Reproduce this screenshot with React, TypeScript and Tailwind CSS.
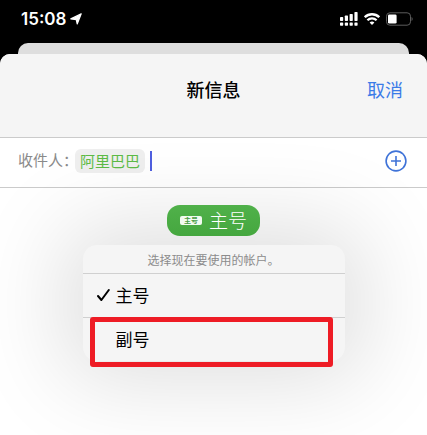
import { useState } from "react";

const accounts = [
  { id: "main", name: "主号" },
  { id: "sub", name: "副号" },
];

function StatusBar() {
  return (
    <div className="flex h-[43px] items-start justify-between pt-[7px] pl-[21px] pr-[14px] text-white">
      <div className="flex items-center gap-1">
        <span className="font-['Inter'] text-[17px] font-semibold leading-6">15:08</span>
        <svg width="12" height="12" viewBox="0 0 12 12" fill="currentColor">
          <path d="M11.2.8 7.2 11 6.3 6.6.8 5.9Z" stroke="currentColor" strokeWidth="1.2" strokeLinejoin="round" />
        </svg>
      </div>

      <div className="flex h-6 items-center gap-[6px]">
        {/* Dual SIM signal */}
        <svg width="18" height="14" viewBox="0 0 18 14" fill="currentColor">
          <rect x="0" y="5" width="3.2" height="4" rx=".7" />
          <rect x="4.8" y="3.6" width="3.2" height="5.4" rx=".7" />
          <rect x="9.6" y="2" width="3.2" height="7" rx=".7" />
          <rect x="14.4" y="0" width="3.2" height="9" rx=".7" />
          <rect x="0" y="10.4" width="3.2" height="3.4" rx=".7" />
          <rect x="4.8" y="10.4" width="3.2" height="3.4" rx=".7" />
          <rect x="9.6" y="10.4" width="3.2" height="3.4" rx=".7" />
          <rect x="14.4" y="10.4" width="3.2" height="3.4" rx=".7" />
        </svg>
        <svg width="16" height="12" viewBox="0 0 16 12" fill="none" stroke="currentColor" strokeWidth="2.3">
          <path d="M.8 4.2a10.3 10.3 0 0 1 14.4 0" />
          <path d="M3.4 7.2a6.6 6.6 0 0 1 9.2 0" />
          <path d="M8 12 5.6 9.6a3.5 3.5 0 0 1 4.8 0Z" fill="currentColor" stroke="none" />
        </svg>
        <svg width="27" height="14" viewBox="0 0 27 14">
          <rect x=".5" y=".8" width="24" height="12.4" rx="3.4" fill="none" stroke="#5c5c5c" />
          <rect x="2" y="2.4" width="8.6" height="9.2" rx="1.4" fill="#fff" />
          <path d="M25.6 5v4c1.3-.6 1.3-3.4 0-4Z" fill="#6b6b6b" />
        </svg>
      </div>
    </div>
  );
}

export default function App() {
  const [selected, setSelected] = useState("main");
  const current = accounts.find((a) => a.id === selected);

  return (
    <div className="flex min-h-screen flex-col overflow-hidden bg-black font-['Noto_Sans_CJK_SC',sans-serif]">
      <StatusBar />

      {/* Edge of the sheet behind */}
      <div className="mx-[18px] h-[11px] rounded-t-[10px] bg-[#dedede]" />

      <main className="flex-1 overflow-hidden rounded-t-[10px] bg-white">
        <header className="grid h-[84px] grid-cols-3 items-center border-b border-[#cbcbcb] bg-[#f5f5f5] px-6 pb-[14px]">
          <h1 className="col-start-2 text-center text-lg font-medium text-black">新信息</h1>
          <button className="justify-self-end text-lg text-[#3b7be8]">取消</button>
        </header>

        <div className="flex h-[50px] items-center border-b border-[#cbcbcb] pr-5 pl-[18px] pb-1">
          <label htmlFor="to" className="w-[57px] text-[15px] whitespace-nowrap text-[#8a8a8a]">
            收件人：
          </label>
          <span className="rounded-md bg-[#efefef] px-[5px] text-[15px] leading-6 text-[#5dbb46]">阿里巴巴</span>
          <span className="ml-[5px] h-5 w-[2px] bg-[#4f5fe0]" />
          <input id="to" type="text" className="min-w-0 flex-1 bg-transparent px-1 text-[15px] outline-none" />
          <button aria-label="添加联系人" className="text-[#3f73d8]">
            <svg width="22" height="22" viewBox="0 0 22 22" fill="none" stroke="currentColor" strokeWidth="1.6">
              <circle cx="11" cy="11" r="9.9" />
              <path d="M11 6v10M6 11h10" />
            </svg>
          </button>
        </div>

        <div className="flex flex-col items-center pt-[17px]">
          <button className="z-10 flex h-[31px] items-center gap-[7px] rounded-[13px] bg-linear-to-b from-[#50b14a] to-[#45a73f] px-[13px] pb-px text-white">
            <span className="rounded-[2px] bg-[#f2fbf1] px-1 text-[7px] leading-[9px] font-bold text-[#4a9d45]">
              {current?.name}
            </span>
            <span className="text-[19px] leading-7 font-light">{current?.name}</span>
          </button>

          <div className="relative mt-[9px] w-[262px] rounded-[14px] bg-[#f5f5f5] shadow-[0_0_90px_20px_rgba(0,0,0,0.13)]">
            <p className="h-[28px] text-center text-xs leading-[30px] text-[#8c8c8c]">选择现在要使用的帐户。</p>
            <ul>
              {accounts.map((account) => (
                <li key={account.id} className="border-t border-[#d0d0d0]">
                  <button
                    onClick={() => setSelected(account.id)}
                    className="flex h-[43px] w-full items-center pb-[2px] pl-[14px] text-left text-[17px] text-black"
                  >
                    <span className="w-[19px]">
                      {account.id === selected && (
                        <svg width="13" height="13" viewBox="0 0 13 13" fill="none" stroke="currentColor" strokeWidth="2">
                          <path d="M1 8 4.4 12 11.8 2" strokeLinecap="round" strokeLinejoin="round" />
                        </svg>
                      )}
                    </span>
                    {account.name}
                  </button>
                </li>
              ))}
            </ul>
            {/* Red highlight around the second account */}
            <div className="pointer-events-none absolute right-3 -bottom-[6px] left-[7px] h-[50px] rounded-[3px] border-[5px] border-[#ee1c25]" />
          </div>
        </div>
      </main>
    </div>
  );
}
